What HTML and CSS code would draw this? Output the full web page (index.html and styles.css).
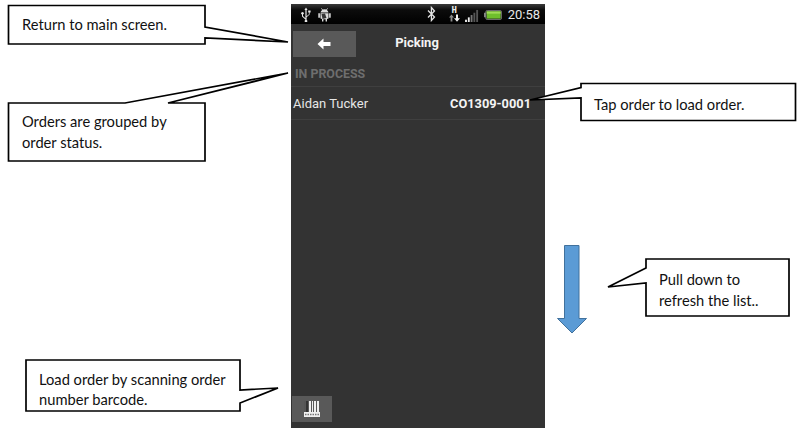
FILE: index.html
```html
<!DOCTYPE html>
<html lang="en">
<head>
<meta charset="utf-8">
<title>Picking</title>
<link rel="stylesheet" href="styles.css">
</head>
<body>
<main class="canvas">
  <section class="phone">
    <header class="status">
      <svg class="ic-usb" viewBox="0 0 12 15"><path d="M6 0.5 4.4 3H5.4V11.2L3 9V7.6A1.3 1.3 0 1 0 2 7.6V9.5L5.4 12.6V13a1.3 1.3 0 1 0 1.2 0V10.3L9.6 7.6V5.6H10.6V3.4H8.2V5.6H8.9V7.2L6.6 9.2V3H7.6Z" fill="#e8e8e8"/></svg>
      <svg class="ic-droid" viewBox="0 0 13 15"><path d="M3.5 1 4.6 2.6A5 5 0 0 1 8.4 2.6L9.5 1 9.9 1.3 8.9 2.9A4 4 0 0 1 10.5 5.6H2.5A4 4 0 0 1 4.1 2.9L3.1 1.3ZM2.5 6.2H10.5V11.5L9 12V14.4H7.6V12.2H5.4V14.4H4V12L2.5 11.5ZM0.3 6.2H1.9V10.8H0.3ZM11.1 6.2H12.7V10.8H11.1Z" fill="#dcdcdc"/><path d="M3.500 7 7 6.500 8.500 11 4.500 12Z" fill="#333"/></svg>
      <span class="status-gap"></span>
      <svg class="ic-bt" viewBox="0 0 9 16"><path d="M1 4.5 7.5 11 4.4 14.5V1.5L7.5 5 1 11.5" fill="none" stroke="#e4e4e4" stroke-width="1.3"/></svg>
      <div class="net">
        <span class="net-h">H</span>
        <svg class="ic-updown" viewBox="0 0 11 8"><path d="M2.5 0.5 5 3.5H3.4V7.5H1.6V3.5H0Z" fill="#8a8a8a"/><path d="M7 0.5H9V4.2H11L8 7.8 5 4.2H7Z" fill="#f2f2f2"/></svg>
      </div>
      <svg class="ic-signal" viewBox="0 0 16 14"><g><rect x="0" y="11.500" width="2" height="2.500" fill="#f0f0f0"/><rect x="3" y="9" width="2" height="5" fill="#f0f0f0"/><rect x="6" y="6.500" width="2" height="7.500" fill="#777"/><rect x="9" y="4" width="2" height="10" fill="#555"/><rect x="12" y="1" width="2" height="13" fill="#555"/></g></svg>
      <svg class="ic-batt" viewBox="0 0 20 11"><rect x="2" y="0.500" width="17.500" height="10" rx="1.500" fill="#222" stroke="#777"/><rect x="0" y="3" width="2" height="5" fill="#888"/><rect x="3" y="1.500" width="15.500" height="8" fill="#6fbf2c"/><rect x="3" y="1.500" width="15.500" height="2.500" fill="#9fdc55"/></svg>
      <time class="clock">20:58</time>
    </header>
    <div class="toolbar">
      <button class="back" aria-label="Back">
        <svg viewBox="0 0 14 12" class="ic-back"><path d="M0.500 6 6.500 0.500V4H13.500V8H6.500V11.500Z" fill="#fff"/></svg>
      </button>
      <h1 class="title">Picking</h1>
    </div>
    <h2 class="group">IN PROCESS</h2>
    <div class="row">
      <span class="customer">Aidan Tucker</span>
      <strong class="order">CO1309-0001</strong>
    </div>
    <div class="spacer"></div>
    <footer class="foot">
      <button class="scan" aria-label="Scan barcode">
        <svg viewBox="0 0 18 18" class="ic-scan"><g fill="#f0f0f0"><rect x="1" y="1" width="1.500" height="11" fill="#555"/><rect x="3" y="1" width="2" height="11" fill="#333"/><rect x="6" y="1" width="2" height="11"/><rect x="9" y="1" width="1" height="11"/><rect x="11" y="1" width="2" height="11"/><rect x="14" y="1" width="2" height="11"/><rect x="1" y="12" width="16" height="5"/></g><path d="M2 14.500H16" stroke="#777" stroke-width="1.500" stroke-dasharray="1.500 1"/></svg>
      </button>
    </footer>
  </section>

  <svg class="marks" viewBox="0 0 800 432">
    <g class="callout">
      <path d="M8.500 5.500H205V27L288 42 205 38V44H8.500Z"/>
      <path d="M8.500 103H125L288 73 168 103H205V161H8.500Z"/>
      <path d="M581 83.500H795.500V120.500H581V98L530 100 581 87.500Z"/>
      <path d="M646 259H789V316H646V283L608 287 646 268Z"/>
      <path d="M26 360H240V390L278 388 240 403V411H26Z"/>
    </g>
    <path class="arrow" d="M564.500 245.500H579V318.500H586.500L572 333 557.500 318.500H564.500Z"/>
  </svg>

  <p class="note note-return">Return to main screen.</p>
  <p class="note note-group">Orders are grouped by<br>order status.</p>
  <p class="note note-tap">Tap order to load order.</p>
  <p class="note note-pull">Pull down to<br>refresh the list..</p>
  <p class="note note-scan">Load order by scanning order<br>number barcode.</p>
</main>
</body>
</html>
```
FILE: styles.css
```css
* { box-sizing: border-box; }
html, body { margin: 0; padding: 0; background: #fff; }
.canvas { position: relative; width: 800px; height: 432px; overflow: hidden; }

.phone {
  position: absolute; left: 291px; top: 4px; width: 254px; height: 424px;
  background: #333; display: flex; flex-direction: column;
  font-family: Roboto, "Liberation Sans", sans-serif; color: #f2f2f2;
}
.status {
  height: 20px; display: flex; align-items: center; padding: 0 5px 0 9px;
  background: linear-gradient(#3a3a3a 0, #0c0c0c 30%, #000 100%);
}
.status svg { display: block; flex: none; }
.ic-usb { width: 12px; height: 15px; }
.ic-droid { width: 13px; height: 15px; margin-left: 6px; }
.status-gap { flex: 1; }
.ic-bt { width: 9px; height: 16px; }
.net { width: 11px; margin-left: 13px; display: flex; flex-direction: column; align-items: center; }
.net-h { font: bold 9px/8px "DejaVu Sans Mono", monospace; color: #eee; }
.ic-updown { width: 11px; height: 8px; }
.ic-signal { width: 15px; height: 13px; margin-left: 5px; margin-top: 3px; }
.ic-batt { width: 18px; height: 10px; margin-left: 4px; margin-top: 1px; }
.clock { font-size: 13px; margin-left: 6px; color: #e8e8e8; }

.toolbar { height: 36px; position: relative; display: flex; align-items: center; justify-content: center; padding-top: 4px; }
.back {
  position: absolute; left: 2px; top: 7px; width: 63px; height: 26px;
  background: #595959; border: 0; padding: 0; display: flex; align-items: center; justify-content: center;
}
.ic-back { width: 14px; height: 12px; position: relative; left: -1px; }
.title { margin: 0; font-size: 13px; font-weight: 700; color: #f4f4f4; position: relative; left: -1px; top: -2px; }

.group {
  margin: 0; height: 27px; padding: 0 0 0 4px; line-height: 28px;
  font-size: 12.400px; font-weight: 700; color: #6e6e6e;
  border-bottom: 1px solid #3f3f3f;
}
.row {
  height: 33px; display: flex; align-items: center; justify-content: space-between;
  padding: 0 14px 0 2px; border-bottom: 1px solid #3f3f3f; font-size: 13px;
}
.customer { color: #e6e6e6; }
.order { font-weight: 700; font-size: 12.800px; color: #f4f4f4; }
.spacer { flex: 1; }
.foot { padding: 0 0 6px 1px; }
.scan {
  width: 40px; height: 26px; background: #595959; border: 0; padding: 0;
  display: flex; align-items: center; justify-content: center;
}
.ic-scan { width: 18px; height: 18px; }

.marks { position: absolute; left: 0; top: 0; width: 800px; height: 432px; }
.callout path { fill: #fff; stroke: #000; stroke-width: 1.700; }
.arrow { fill: #5b9bd5; stroke: #41719c; stroke-width: 1; }

.note {
  position: absolute; margin: 0; font-family: Lato, "Open Sans", sans-serif;
  font-size: 14.700px; line-height: 20px; color: #111;
}
.note-return { left: 22px; top: 14px; }
.note-group { left: 22px; top: 111px; line-height: 20.500px; }
.note-tap { left: 594px; top: 94px; }
.note-pull { left: 659px; top: 269px; line-height: 21px; }
.note-scan { left: 39px; top: 369px; }
```
